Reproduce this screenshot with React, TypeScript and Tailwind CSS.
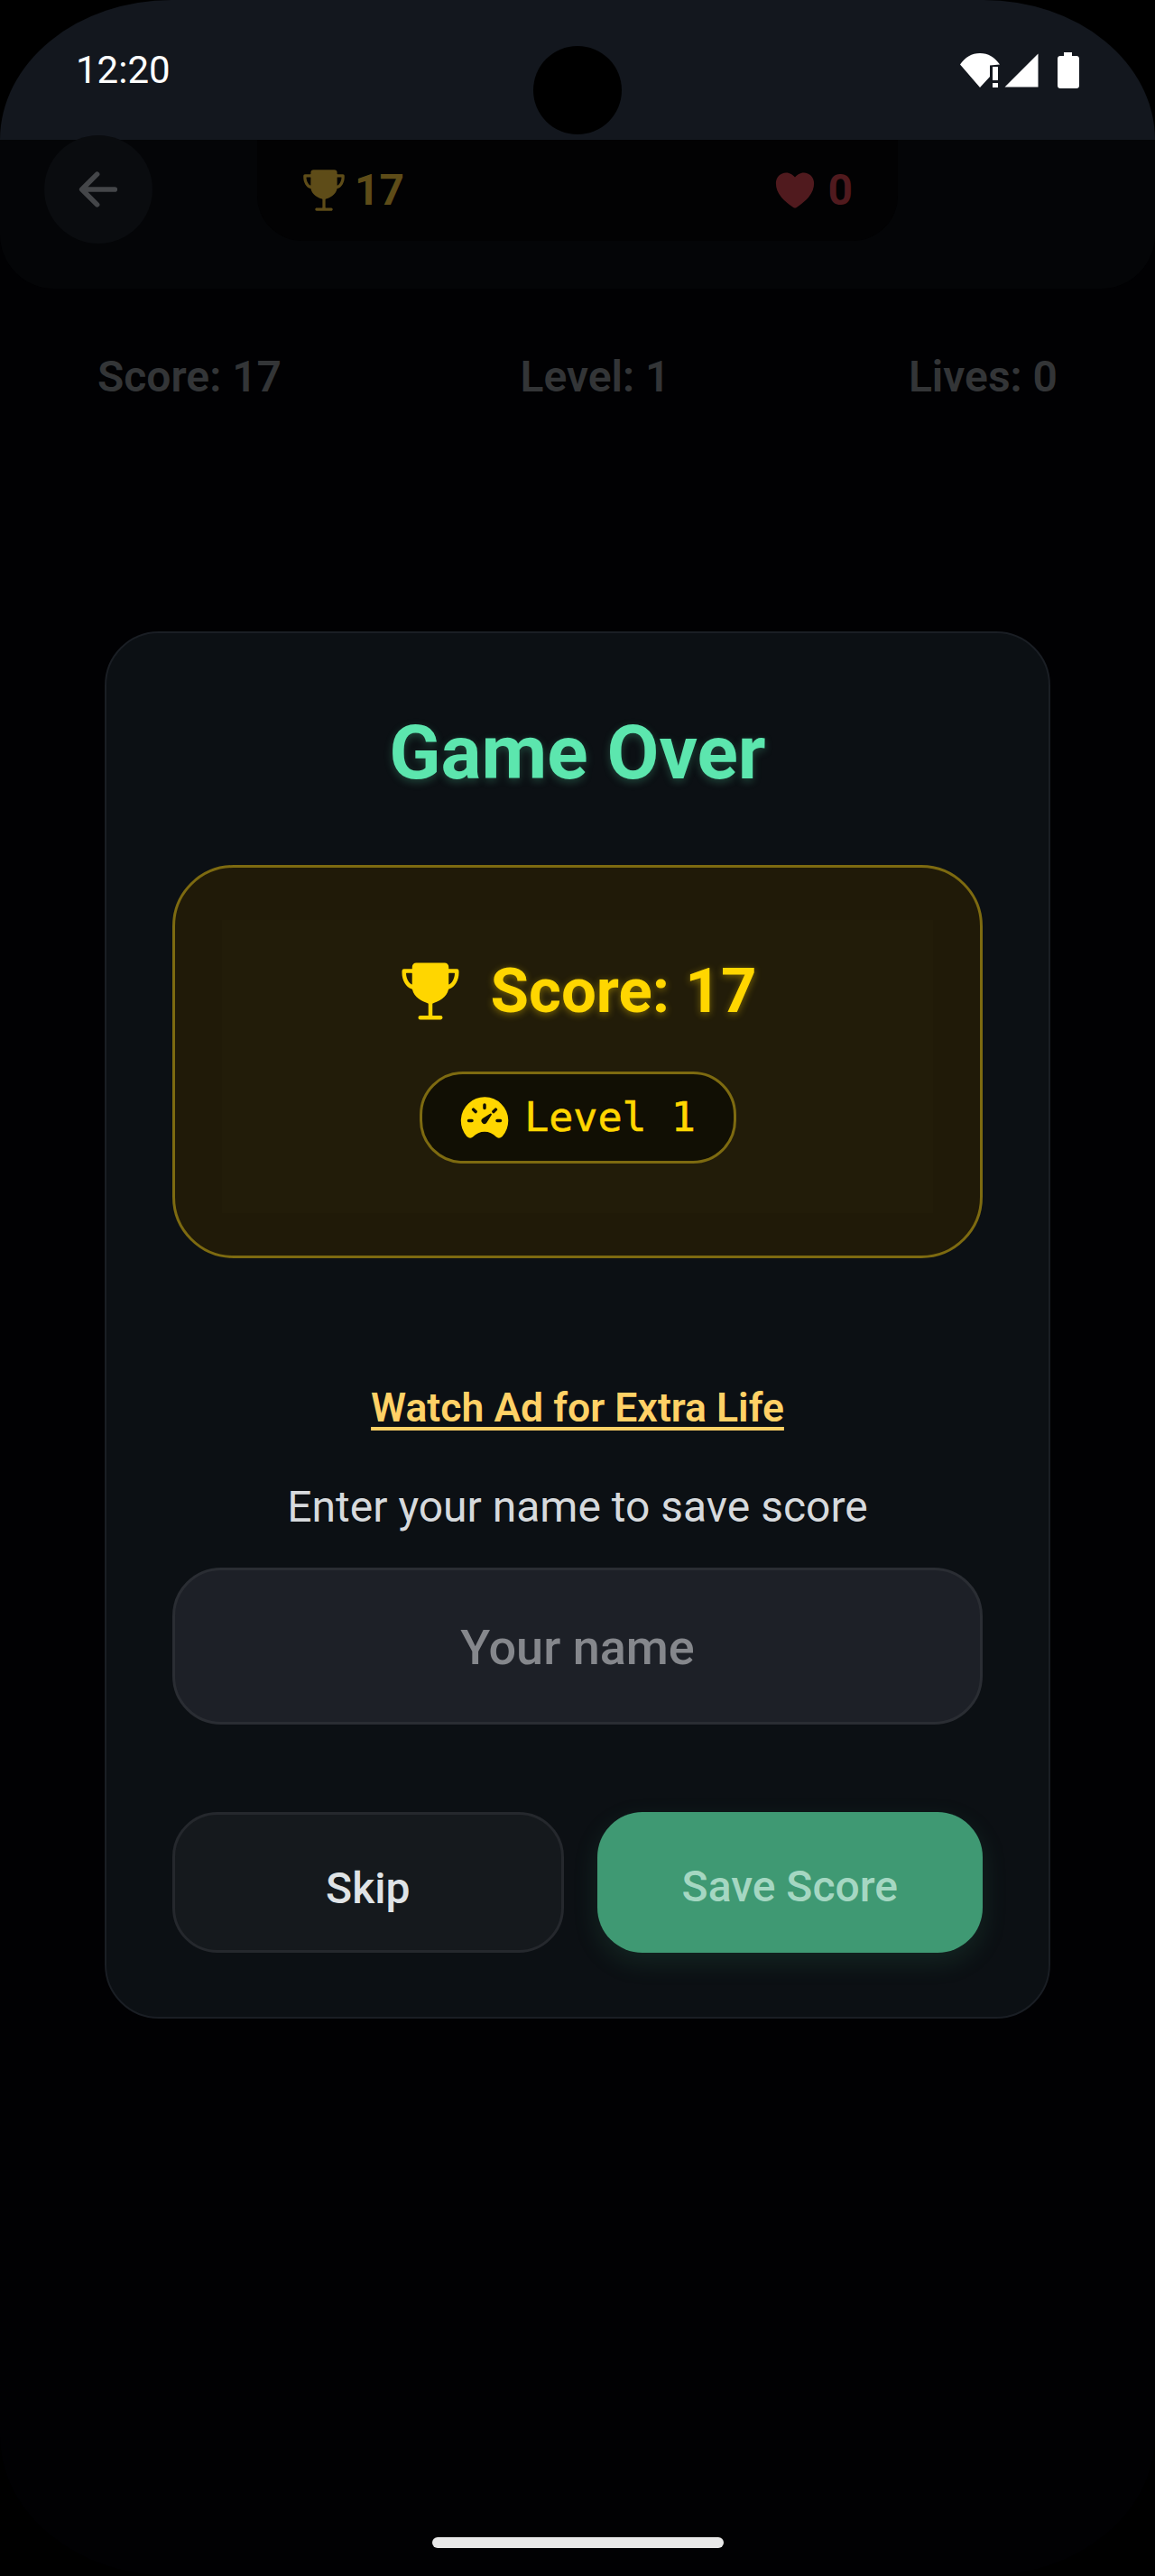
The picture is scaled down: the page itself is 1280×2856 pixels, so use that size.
import { IoArrowBack, IoHeart, IoSpeedometer, IoTrophy } from 'react-icons/io5';

function StatusIcons() {
  return (
    <div className="flex items-center">
      <svg width="44" height="40" viewBox="0 0 44 40" fill="#ffffff" className="mr-[5px]">
        <path d="M0 13.5C5.5 5.5 13 1 22 1C31 1 38.5 5.5 44 13.5L33 14.5L33 27L22 39Z" />
        <rect x="36" y="16" width="6" height="15" />
        <rect x="36" y="34" width="6" height="5" />
      </svg>
      <svg width="38" height="38" viewBox="0 0 38 38" fill="#ffffff" className="mr-[21px]">
        <path d="M37.5 0.5V37.5H0.5Z" />
      </svg>
      <svg width="24" height="40" viewBox="0 0 24 40" fill="#ffffff">
        <path d="M7 0H16V4H21C22.7 4 24 5.3 24 7V37C24 38.7 22.7 40 21 40H3C1.3 40 0 38.7 0 37V7C0 5.3 1.3 4 3 4H7Z" />
      </svg>
    </div>
  );
}

function StatusBar() {
  return (
    <div className="relative h-[155px] rounded-tl-[190px_155px] rounded-tr-[190px_155px] bg-[#13171e] pl-[84px] pr-[84px] pt-[58px]">
      <div className="flex items-center justify-between">
        <span className="text-[42px] leading-[38px] text-white">12:20</span>
        <StatusIcons />
      </div>
      <div className="absolute left-[591px] top-[51px] h-[98px] w-[98px] rounded-full bg-black" />
    </div>
  );
}

function BackgroundGame() {
  return (
    <div>
      <div className="relative h-[165px] rounded-b-[60px] bg-[#040507]">
        <div className="absolute left-[49px] top-[-5px] flex h-[120px] w-[120px] items-center justify-center rounded-full bg-[#0a0c0f]">
          <IoArrowBack className="h-[60px] w-[60px] text-[#444649]" />
        </div>
        <div className="absolute left-[285px] top-[0px] flex h-[112px] w-[710px] items-center justify-between rounded-b-[50px] bg-[#020203] pl-[48px] pr-[50px]">
          <div className="flex items-center gap-[8px]">
            <IoTrophy className="h-[52px] w-[52px] text-[#5e4c18]" />
            <span className="text-[48px] font-bold text-[#5e4c18]">17</span>
          </div>
          <div className="flex items-center gap-[10px]">
            <IoHeart className="h-[52px] w-[52px] text-[#501a1e]" />
            <span className="text-[48px] font-bold text-[#501a1e]">0</span>
          </div>
        </div>
      </div>
      <div className="mt-[70px] flex justify-between pl-[108px] pr-[108px] text-[48px] font-semibold leading-[56px] text-[#333537]">
        <span>Score: 17</span>
        <span>Level: 1</span>
        <span>Lives: 0</span>
      </div>
    </div>
  );
}

function GameOverModal() {
  return (
    <div className="absolute inset-x-[116px] top-[700px] flex h-[1538px] flex-col rounded-[60px] border-2 border-[#1a1e24] bg-[#0c1014] px-[73px]">
      <h1 className="mt-[84px] text-center text-[84px] font-bold leading-[98px] text-[#5ce6ae] [text-shadow:0_3px_10px_rgba(92,230,174,0.25)]">
        Game Over
      </h1>
      <div className="mt-[75px] h-[436px] rounded-[68px] border-[3px] border-[#7d6a10] bg-[#201a08] pb-[47px] pl-[52px] pr-[52px] pt-[58px]">
        <div className="flex h-full flex-col items-center bg-[#221c09] pt-[39px]">
          <div className="flex h-[80px] items-center gap-[30px]">
            <IoTrophy className="h-[72px] w-[72px] text-[#ffd600]" />
            <span className="text-[69px] font-bold leading-[80px] text-[#ffd600] [text-shadow:0_2px_8px_rgba(255,214,0,0.4)]">
              Score: 17
            </span>
          </div>
          <div className="mt-[49px] flex h-[102px] w-[351px] items-center justify-center gap-[16px] rounded-[48px] border-[3px] border-[#7d6a10] bg-[#110f04]">
            <IoSpeedometer className="h-[56px] w-[56px] text-[#ffd600]" />
            <span className="font-['DejaVu_Sans_Mono',monospace] text-[45px] leading-[52px] text-[#ffd600] [-webkit-text-stroke:0.6px_#ffd600]">
              Level 1
            </span>
          </div>
        </div>
      </div>
      <a className="mt-[140px] self-center text-[44.5px] font-semibold leading-[52px] text-[#ffd166] underline underline-offset-[6px]">
        Watch Ad for Extra Life
      </a>
      <p className="mt-[56px] text-center text-[48px] leading-[56px] text-[#d7dadd]">Enter your name to save score</p>
      <div className="mt-[39px] flex h-[174px] items-center justify-center rounded-[54px] border-[3px] border-[#2a2d33] bg-[#1d2027] pt-[3px] text-[54px] font-medium text-[#85878c]">
        Your name
      </div>
      <div className="mt-[97px] flex gap-[37px]">
        <button className="h-[156px] flex-1 rounded-[50px] border-[3px] border-[#25282d] bg-[#15191d] pt-[13px] text-[48px] font-medium text-[#dfe3e6]">
          Skip
        </button>
        <button className="h-[156px] flex-1 rounded-[50px] bg-[#3f9973] pt-[9px] text-[48px] font-medium text-[#a5d7c2] shadow-[0_10px_28px_rgba(63,153,115,0.16)]">
          Save Score
        </button>
      </div>
    </div>
  );
}

export default function App() {
  return (
    <div className="relative h-[2856px] w-[1280px] overflow-hidden bg-black font-['Roboto',sans-serif]">
      <div className="h-full rounded-[190px_/_155px] bg-[#010103]">
        <StatusBar />
        <BackgroundGame />
      </div>
      <GameOverModal />
      <div className="absolute bottom-[31px] left-[479px] h-[12px] w-[323px] rounded-full bg-[#e8e8e8]" />
    </div>
  );
}
